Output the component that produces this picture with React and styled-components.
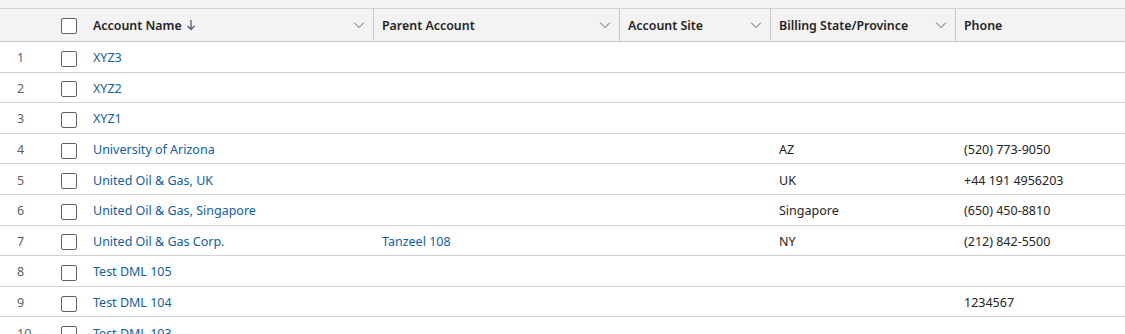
import React from 'react';
import styled, { createGlobalStyle } from 'styled-components';

const GlobalStyle = createGlobalStyle`
  html, body {
    margin: 0;
    padding: 0;
    background: #ffffff;
    font-family: "Noto Sans", "Open Sans", Arial, sans-serif;
    overflow: hidden;
  }
`;

const COLUMNS = '53px 32px 289px 246px 151px 185px 1fr';

const Page = styled.div`
  width: 1125px;
  height: 334px;
  overflow: hidden;
`;

const TopStrip = styled.div`
  height: 8px;
  background: #f3f3f3;
  border-bottom: 1px solid #d1d1d1;
`;

const HeaderRow = styled.div`
  display: grid;
  grid-template-columns: ${COLUMNS};
  height: 32px;
  background: #f3f3f3;
  border-bottom: 1px solid #c8c8c8;
  box-sizing: content-box;
`;

const HeaderCell = styled.div`
  display: flex;
  align-items: center;
  gap: 6px;
  padding: 0 8px;
  font-size: 12.4px;
  font-weight: 600;
  color: #242424;
  border-right: ${(p) => (p.$divider ? '1px solid #c8c8c8' : 'none')};
  min-width: 0;
`;

const HeaderLabel = styled.span`
  flex: 1;
  display: flex;
  align-items: center;
  gap: 5px;
  white-space: nowrap;
`;

const Row = styled.div`
  display: grid;
  grid-template-columns: ${COLUMNS};
  height: 30.6px;
  box-sizing: border-box;
  border-bottom: 1px solid #d1d1d1;
  align-items: center;
`;

const NumCell = styled.div`
  padding: 2px 0 0 17px;
  font-size: 12.5px;
  color: #616161;
`;

const CheckCell = styled.div`
  display: flex;
  align-items: center;
  padding: ${(p) => (p.$head ? '2px' : '4px')} 0 0 8px;
`;

const Checkbox = styled.span`
  display: inline-block;
  width: 16px;
  height: 16px;
  box-sizing: border-box;
  border: 1px solid #616161;
  border-radius: 2px;
  background: #fff;
`;

const Cell = styled.div`
  padding: 2px 8px 0;
  font-size: 12.5px;
  color: ${(p) => (p.$link ? '#115ea3' : '#242424')};
  white-space: nowrap;
  overflow: hidden;
`;

const Chevron = () => (
  <svg width="12" height="12" viewBox="0 0 12 12" fill="none">
    <path d="M1.5 4l4.5 4.5L10.5 4" stroke="#616161" strokeWidth="1" strokeLinecap="round" />
  </svg>
);

const SortArrow = () => (
  <svg width="8" height="11" viewBox="0 0 8 11" fill="none">
    <path d="M4 0.5v9M0.8 6.3L4 9.5l3.2-3.2" stroke="#4f5d7e" strokeWidth="1.3" strokeLinecap="round" />
  </svg>
);

const headers = [
  { label: 'Account Name', sort: true, chevron: true },
  { label: 'Parent Account', chevron: true },
  { label: 'Account Site', chevron: true },
  { label: 'Billing State/Province', chevron: true },
  { label: 'Phone' },
];

const rows = [
  ['XYZ3', '', '', '', ''],
  ['XYZ2', '', '', '', ''],
  ['XYZ1', '', '', '', ''],
  ['University of Arizona', '', '', 'AZ', '(520) 773-9050'],
  ['United Oil & Gas, UK', '', '', 'UK', '+44 191 4956203'],
  ['United Oil & Gas, Singapore', '', '', 'Singapore', '(650) 450-8810'],
  ['United Oil & Gas Corp.', 'Tanzeel 108', '', 'NY', '(212) 842-5500'],
  ['Test DML 105', '', '', '', ''],
  ['Test DML 104', '', '', '', '1234567'],
  ['Test DML 103', '', '', '', ''],
];

const App = () => {
  return (
    <Page>
      <GlobalStyle />
      <TopStrip />
      <HeaderRow>
        <div />
        <CheckCell $head>
          <Checkbox />
        </CheckCell>
        {headers.map((h) => (
          <HeaderCell key={h.label} $divider={h.chevron}>
            <HeaderLabel>
              {h.label}
              {h.sort && <SortArrow />}
            </HeaderLabel>
            {h.chevron && <Chevron />}
          </HeaderCell>
        ))}
      </HeaderRow>
      {rows.map((r, i) => (
        <Row key={i}>
          <NumCell>{i + 1}</NumCell>
          <CheckCell>
            <Checkbox />
          </CheckCell>
          <Cell $link>{r[0]}</Cell>
          <Cell $link>{r[1]}</Cell>
          <Cell>{r[2]}</Cell>
          <Cell>{r[3]}</Cell>
          <Cell>{r[4]}</Cell>
        </Row>
      ))}
    </Page>
  );
};

export default App;
